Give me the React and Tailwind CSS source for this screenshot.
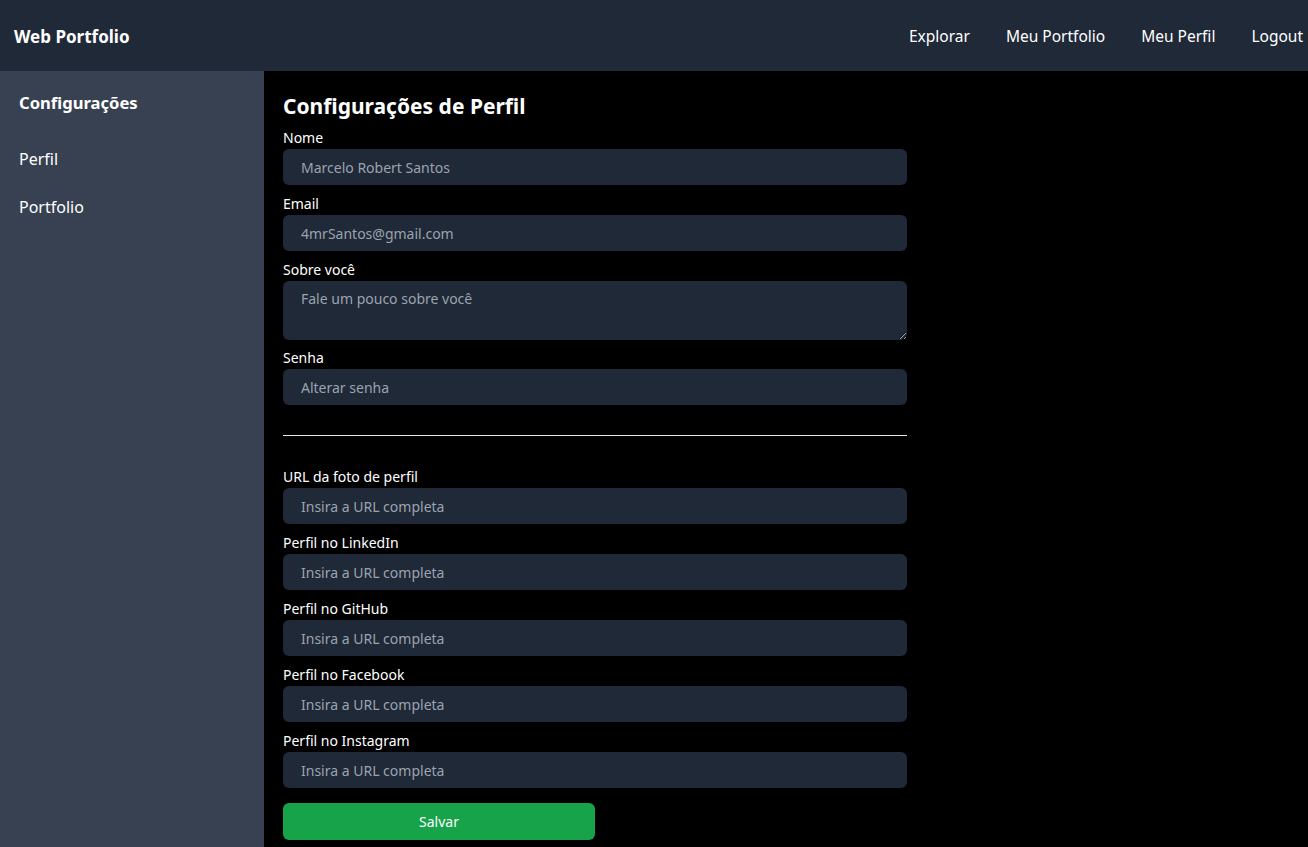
import React from "react";

const font = { fontFamily: '"Noto Sans", "Open Sans", sans-serif' };

function Field({ label, placeholder, first, afterHr, tight }) {
  return (
    <div className={first ? "mt-[6px]" : afterHr ? "mt-[30px]" : tight ? "mt-[7px]" : "mt-[8px]"}>
      <label className="block text-[14px] leading-[22px] text-white">{label}</label>
      <input
        placeholder={placeholder}
        className="block w-full h-[36px] rounded-md bg-[#1f2937] px-[18px] text-[14px] text-white placeholder:text-[#9ca3af] outline-none"
      />
    </div>
  );
}

export default function App() {
  return (
    <div style={font} className="w-[1308px] h-[847px] flex flex-col bg-black overflow-hidden">
      <nav className="h-[71px] shrink-0 bg-[#1f2937] flex items-center justify-between pl-[14px] pr-[5px] pt-[3px]">
        <span className="text-white font-bold text-[17px]">Web Portfolio</span>
        <div className="flex items-center gap-[36px] text-white text-[15.5px]">
          <a>Explorar</a>
          <a>Meu Portfolio</a>
          <a>Meu Perfil</a>
          <a>Logout</a>
        </div>
      </nav>
      <div className="flex flex-1">
        <aside className="w-[264px] shrink-0 bg-[#374151] px-[19px] pt-[18px]">
          <h2 className="text-white font-bold text-[16.6px] leading-[28px]">Configurações</h2>
          <ul className="mt-[28px] flex flex-col gap-[20px] text-white text-[16px] leading-[28px]">
            <li>Perfil</li>
            <li>Portfolio</li>
          </ul>
        </aside>
        <main className="flex-1 pl-[19px] pt-[20px]">
          <div className="w-[624px]">
            <h1 className="text-white font-bold text-[21px] leading-[30px]">Configurações de Perfil</h1>
            <Field label="Nome" placeholder="Marcelo Robert Santos" first />
            <Field label="Email" placeholder="4mrSantos@gmail.com" />
            <div className="mt-[8px]">
              <label className="block text-[14px] leading-[22px] text-white">Sobre você</label>
              <textarea
                placeholder="Fale um pouco sobre você"
                className="block w-full h-[59px] rounded-md bg-[#1f2937] px-[18px] py-[7px] text-[14px] text-white placeholder:text-[#9ca3af] outline-none"
              />
            </div>
            <Field label="Senha" placeholder="Alterar senha" tight />
            <hr className="mt-[30px] border-t border-[#e5e7eb]" />
            <Field label="URL da foto de perfil" placeholder="Insira a URL completa" afterHr />
            <Field label="Perfil no LinkedIn" placeholder="Insira a URL completa" />
            <Field label="Perfil no GitHub" placeholder="Insira a URL completa" />
            <Field label="Perfil no Facebook" placeholder="Insira a URL completa" />
            <Field label="Perfil no Instagram" placeholder="Insira a URL completa" />
            <button className="mt-[15px] w-[312px] h-[37px] rounded-md bg-[#16a34a] text-white text-[14px]">
              Salvar
            </button>
          </div>
        </main>
      </div>
    </div>
  );
}
